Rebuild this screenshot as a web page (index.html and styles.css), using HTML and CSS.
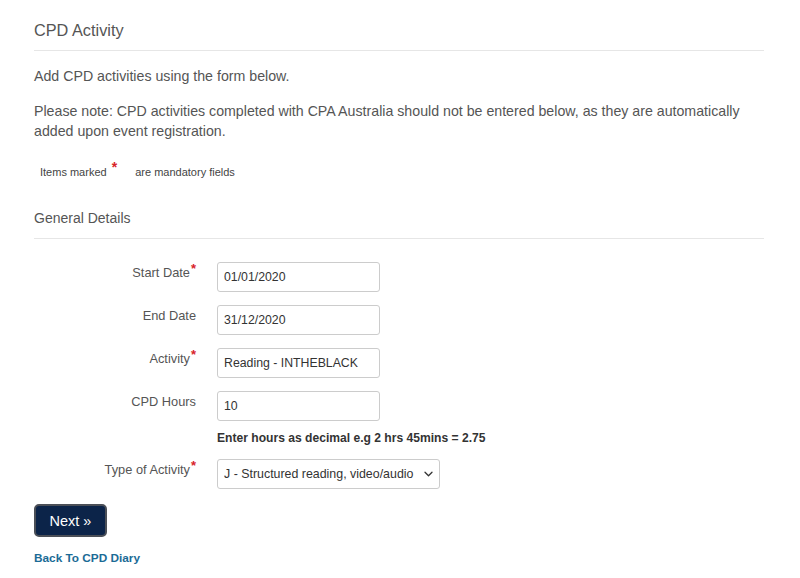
FILE: index.html
```html
<!DOCTYPE html>
<html>
<head>
<meta charset="utf-8">
<link rel="stylesheet" href="styles.css">
</head>
<body>
<div class="page">
  <div class="section-head">
    <h1 class="title">CPD Activity</h1>
  </div>
  <p class="intro">Add CPD activities using the form below.</p>
  <p class="note">Please note: CPD activities completed with CPA Australia should not be entered below, as they are automatically added upon event registration.</p>
  <p class="mandatory">Items marked <span class="req">*</span> <span class="gap"></span>are mandatory fields</p>
  <div class="section-head sub">
    <h2 class="subtitle">General Details</h2>
  </div>
  <form class="form">
    <div class="row">
      <label class="label">Start Date<span class="req">*</span></label>
      <input class="input" type="text" value="01/01/2020">
    </div>
    <div class="row">
      <label class="label">End Date</label>
      <input class="input" type="text" value="31/12/2020">
    </div>
    <div class="row">
      <label class="label">Activity<span class="req">*</span></label>
      <input class="input" type="text" value="Reading - INTHEBLACK">
    </div>
    <div class="row row-tight">
      <label class="label">CPD Hours</label>
      <input class="input" type="text" value="10">
    </div>
    <div class="help-row">
      <span></span>
      <p class="help">Enter hours as decimal e.g 2 hrs 45mins = 2.75</p>
    </div>
    <div class="row row-select">
      <label class="label">Type of Activity<span class="req">*</span></label>
      <div class="select-wrap">
        <select class="select">
          <option>J - Structured reading, video/audio</option>
        </select>
        <svg class="chev" width="9" height="6" viewBox="0 0 9 6"><path d="M1 1.2l3.5 3.5 3.5-3.5" fill="none" stroke="#333" stroke-width="1.3" stroke-linecap="round" stroke-linejoin="round"/></svg>
      </div>
    </div>
    <button class="btn" type="button">Next »</button>
    <a class="back" href="#">Back To CPD Diary</a>
  </form>
</div>
</body>
</html>
```

FILE: styles.css
```css
html, body {
  margin: 0;
  padding: 0;
  background: #fff;
}
body {
  font-family: "Liberation Sans", Arial, sans-serif;
  color: #555;
}
.page {
  width: 730px;
  padding: 21px 0 0 34px;
}
.section-head {
  border-bottom: 1px solid #e6e6e6;
  padding-bottom: 10px;
}
.title {
  margin: 0;
  font-size: 16.3px;
  font-weight: normal;
  line-height: 19px;
  color: #555;
}
.intro {
  margin: 15px 0 0;
  font-size: 14.2px;
  line-height: 20px;
  color: #555;
}
.note {
  margin: 15px 0 0;
  font-size: 14.2px;
  line-height: 20px;
  color: #555;
}
.mandatory {
  margin: 23px 0 0 6px;
  font-size: 11px;
  line-height: 16px;
  color: #444;
}
.mandatory .gap {
  display: inline-block;
  width: 15px;
}
.req {
  color: #d8232a;
  font-size: 14px;
  font-weight: bold;
  position: relative;
  top: -4px;
  line-height: 0;
  margin-left: 2px;
}
.sub {
  margin-top: 28px;
}
.subtitle {
  margin: 0;
  font-size: 14px;
  font-weight: normal;
  line-height: 20px;
  color: #555;
}
.form {
  margin-top: 23px;
  display: flex;
  flex-direction: column;
  align-items: flex-start;
}
.row, .help-row {
  display: grid;
  grid-template-columns: 162px auto;
  column-gap: 21px;
  align-items: start;
  margin-bottom: 13px;
}
.row-tight {
  margin-bottom: 9px;
}
.help-row {
  margin-bottom: 13px;
}
.label {
  text-align: right;
  font-size: 12.8px;
  line-height: 16px;
  padding-top: 3px;
  color: #555;
  white-space: nowrap;
}
.label .req {
  font-size: 13px;
  top: -4px;
  margin-left: 1px;
}
.input {
  box-sizing: border-box;
  width: 163px;
  height: 30px;
  border: 1px solid #ccc;
  border-radius: 3px;
  padding: 0 6px;
  font-family: "Liberation Sans", Arial, sans-serif;
  font-size: 12.3px;
  color: #333;
  margin: 0;
  outline: none;
}
.help {
  margin: 0;
  font-size: 12.1px;
  font-weight: bold;
  line-height: 16px;
  color: #333;
}
.row-select {
  margin-bottom: 15px;
}
.select-wrap {
  position: relative;
  width: 223px;
  height: 30px;
}
.select {
  -webkit-appearance: none;
  appearance: none;
  box-sizing: border-box;
  width: 223px;
  height: 30px;
  border: 1px solid #ccc;
  border-radius: 3px;
  padding: 0 6px;
  background: #fff;
  font-family: "Liberation Sans", Arial, sans-serif;
  font-size: 12.4px;
  color: #333;
  margin: 0;
  outline: none;
}
.chev {
  position: absolute;
  right: 7px;
  top: 12px;
}
.btn {
  box-sizing: border-box;
  width: 73px;
  height: 33px;
  background: #0c2449;
  border: 2px solid #4b4f57;
  border-radius: 5px;
  color: #fff;
  font-family: "Liberation Sans", Arial, sans-serif;
  font-size: 14.5px;
  padding: 0;
  margin: 0;
  cursor: pointer;
}
.back {
  margin-top: 13px;
  font-size: 11.8px;
  line-height: 16px;
  font-weight: bold;
  color: #1b6b96;
  text-decoration: none;
}
```
